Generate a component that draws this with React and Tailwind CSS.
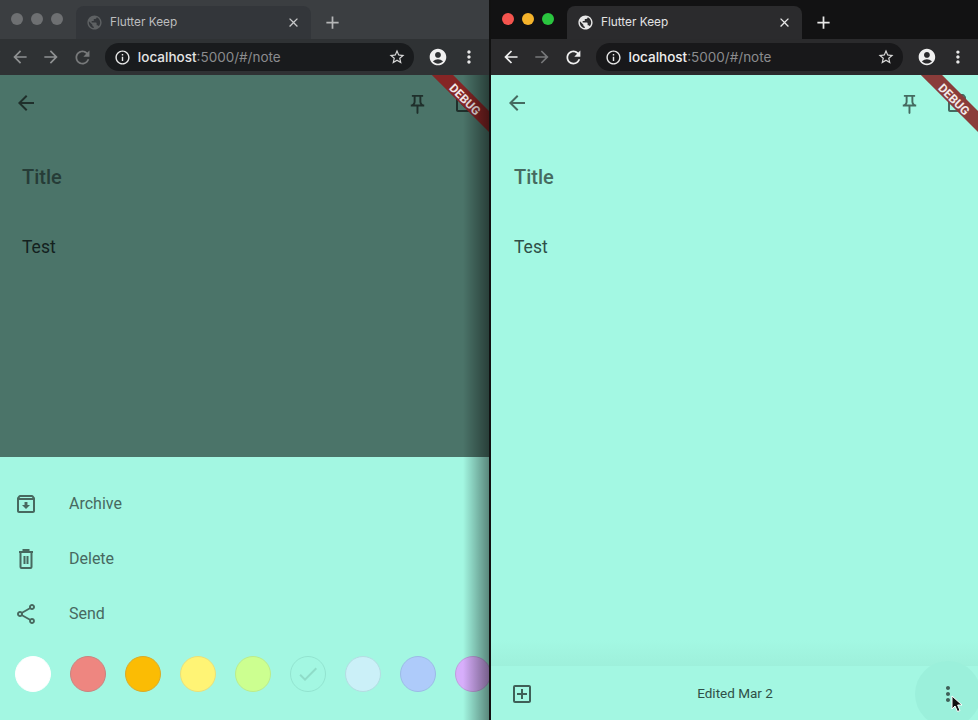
import React from "react";
import {
  MdAdd,
  MdAccountCircle,
  MdArrowBack,
  MdArrowForward,
  MdCheck,
  MdClose,
  MdInfoOutline,
  MdMoreVert,
  MdOutlineAddBox,
  MdOutlineArchive,
  MdOutlineShare,
  MdPublic,
  MdRefresh,
  MdStarBorder,
} from "react-icons/md";

// Outlined pin, drawn because the package's one has a different head
const PinIcon = ({ className }) => {
  return (
    <svg className={className} width="23" height="23" viewBox="0 0 24 24" fill="currentColor">
      <path d="M14 4v5c0 1.12.37 2.16 1 3H9c.65-.86 1-1.9 1-3V4h4m3-2H7c-.55 0-1 .45-1 1s.45 1 1 1h1v5c0 1.66-1.34 3-3 3v2h5.97v7l1 1 1-1v-7H19v-2c-1.66 0-3-1.34-3-3V4h1c.55 0 1-.45 1-1s-.45-1-1-1z" />
    </svg>
  );
};

// Trash can with the two inner bars
const TrashIcon = ({ className }) => {
  return (
    <svg className={className} width="24" height="24" viewBox="0 0 24 24" fill="none" stroke="currentColor" strokeWidth="2">
      <path d="M5 5h14" />
      <path d="M9.5 5V3h5v2" />
      <path d="M6.5 5v15a1 1 0 0 0 1 1h9a1 1 0 0 0 1-1V5" />
      <path d="M10.5 9v8" />
      <path d="M13.5 9v8" />
    </svg>
  );
};

// BrowserBar Component
const BrowserBar = ({ dimmed }) => {
  return (
    <div className="font-['Inter',sans-serif]">
      <div className={`h-[39px] flex items-end pl-[76px] ${dimmed ? "bg-[#3b3e41]" : "bg-[#121213]"} relative`}>
        <div className="absolute left-[11px] top-[13px] flex gap-[8px]">
          <span className={`w-3 h-3 rounded-full ${dimmed ? "bg-[#6e7072]" : "bg-[#f4544e]"}`} />
          <span className={`w-3 h-3 rounded-full ${dimmed ? "bg-[#6e7072]" : "bg-[#f5b32b]"}`} />
          <span className={`w-3 h-3 rounded-full ${dimmed ? "bg-[#6e7072]" : "bg-[#2ac53f]"}`} />
        </div>
        <div className={`w-[235px] h-[33px] rounded-t-lg flex items-center pl-[10px] pr-[10px] ${dimmed ? "bg-[#33363a]" : "bg-[#2b2b2d]"}`}>
          <MdPublic className={`text-[17px] ${dimmed ? "text-[#5e6163]" : "text-[#e8e8e8]"}`} />
          <span className={`ml-[7px] text-[11.8px] flex-1 ${dimmed ? "text-[#bcbdbe]" : "text-[#e3e3e3]"}`}>Flutter Keep</span>
          <MdClose className={`text-[15px] ${dimmed ? "text-[#c8c9ca]" : "text-[#e8e8e8]"}`} />
        </div>
        <MdAdd className={`text-[21px] ml-[11px] mb-[6px] ${dimmed ? "text-[#b5b6b7]" : "text-[#e8e8e8]"}`} />
      </div>
      <div className={`h-[36px] flex items-center pl-[10px] pr-[10px] ${dimmed ? "bg-[#2f3234]" : "bg-[#2a2a2c]"}`}>
        <MdArrowBack className={`text-[20px] ${dimmed ? "text-[#8f9192]" : "text-[#f0f0f0]"}`} />
        <MdArrowForward className={`text-[20px] ml-[11px] ${dimmed ? "text-[#8f9192]" : "text-[#77787a]"}`} />
        <MdRefresh className={`text-[21px] ml-[11px] ${dimmed ? "text-[#77797a]" : "text-[#f0f0f0]"}`} />
        <div className={`ml-[12px] w-[310px] h-[28px] rounded-full flex items-center pl-[9px] pr-[8px] ${dimmed ? "bg-[#191b1d]" : "bg-[#18181a]"}`}>
          <MdInfoOutline className="text-[17px] text-[#e8e8e8]" />
          <span className="ml-[7px] text-[13.5px] flex-1 text-[#8b8c8e]">
            <span className={dimmed ? "text-[#e4e4e4] font-medium" : "text-[#eeeeee] font-medium"}>localhost</span>:5000/#/note
          </span>
          <MdStarBorder className="text-[18px] text-[#d8d8d8]" />
        </div>
        <MdAccountCircle className="text-[20px] ml-[14px] text-[#f0f0f0]" />
        <MdMoreVert className="text-[20px] ml-[11px] text-[#e8e8e8]" />
      </div>
    </div>
  );
};

// DebugBanner Component
const DebugBanner = ({ dimmed }) => {
  return (
    <div className={`absolute top-[16px] right-[-22px] w-[90px] h-[15px] rotate-45 flex items-center justify-center pt-[3px] text-[12px] leading-none font-bold text-white/90 ${dimmed ? "bg-[#852525]" : "bg-[#8a3c3a]"}`}>
      DEBUG
    </div>
  );
};

// NoteHeader Component
const NoteHeader = ({ inset, barPadding, textTone, titleTone, iconTone }) => {
  return (
    <div className="flex flex-col">
      <div className={`flex items-center h-[55px] pl-[14px] ${barPadding} ${iconTone}`}>
        <MdArrowBack className="text-[24px]" />
        <div className="flex-1" />
        <PinIcon className="mt-[3px]" />
        <MdOutlineArchive className="text-[24px] ml-[24px]" />
      </div>
      <div className={`${inset} mt-[34px] text-[20px] font-medium leading-[26px] ${titleTone}`}>Title</div>
      <div className={`${inset} mt-[46px] text-[17.5px] leading-[22px] ${textTone}`}>Test</div>
    </div>
  );
};

// SheetRow Component
const SheetRow = ({ icon: Icon, label }) => {
  return (
    <div className="flex items-center h-[55px] pl-[14px] text-[#47695f]">
      <Icon className="text-[24px]" />
      <span className="ml-[31px] text-[16px]">{label}</span>
    </div>
  );
};

const swatches = [
  "bg-white border-white",
  "bg-[#ee8680] border-[#c98480]",
  "bg-[#fbbc04] border-[#d9ab2a]",
  "bg-[#fff475] border-[#e8e07c]",
  "bg-[#ccff90] border-[#bcec8c]",
  "bg-[#a3f7e2] border-[#93e4d0]",
  "bg-[#cbf0f8] border-[#b4dde2]",
  "bg-[#aecbfa] border-[#9cbce6]",
  "bg-[#d7aefb] border-[#bf9fdc]",
];

// LeftWindow Component
const LeftWindow = () => {
  return (
    <div className="w-[489px] h-[720px] flex flex-col relative overflow-hidden shrink-0">
      <BrowserBar dimmed />
      <div className="h-[382px] bg-[#4b7469] relative overflow-hidden">
        <NoteHeader
          inset="ml-[22px]"
          barPadding="pr-[12px]"
          iconTone="text-[#1f2f2b]"
          titleTone="text-[#263c37]"
          textTone="text-[#13211e]"
        />
        <DebugBanner dimmed />
      </div>
      <div className="flex-1 bg-[#a3f7e2] pt-[19px]">
        <SheetRow icon={MdOutlineArchive} label="Archive" />
        <SheetRow icon={TrashIcon} label="Delete" />
        <SheetRow icon={MdOutlineShare} label="Send" />
        <div className="flex items-center gap-[19px] pl-[15px] mt-[15px]">
          {swatches.map((swatch, i) => (
            <div key={i} className={`w-[36px] h-[36px] rounded-full border shrink-0 flex items-center justify-center ${swatch}`}>
              {i === 5 && <MdCheck className="text-[24px] text-[#8fdcc8]" />}
            </div>
          ))}
        </div>
      </div>
      <div className="absolute right-0 top-[75px] bottom-0 w-[26px] bg-gradient-to-r from-transparent to-black/45" />
    </div>
  );
};

// RightWindow Component
const RightWindow = () => {
  return (
    <div className="flex-1 h-[720px] flex flex-col relative overflow-hidden border-l-2 border-[#111]">
      <BrowserBar />
      <div className="flex-1 bg-[#a3f8e3] relative overflow-hidden">
        <NoteHeader
          inset="ml-[23px]"
          barPadding="pr-[9px]"
          iconTone="text-[#456a60]"
          titleTone="text-[#466a60]"
          textTone="text-[#2f4f47]"
        />
        <DebugBanner />
      </div>
      <div className="h-[26px] bg-gradient-to-b from-[#a3f8e3] to-[#9ef0db] -mt-[26px] relative" />
      <div className="h-[54px] bg-[#a3f7e2] flex items-center pl-[19px] pr-[18px] pt-[2px] relative text-[#3f5f57]">
        <MdOutlineAddBox className="text-[24px]" />
        <span className="flex-1 text-center text-[13.5px] text-[#2f4f47] -mt-[2px]">Edited Mar 2</span>
        <div className="relative">
          <div className="absolute -left-[21px] -top-[21px] w-[66px] h-[66px] rounded-full bg-[#9bf0db]" />
          <MdMoreVert className="text-[24px] relative" />
          <svg className="absolute left-[14px] top-[13px]" width="14" height="18" viewBox="0 0 14 18">
            <path d="M2 1 L2 14 L5 11 L7.5 16.5 L10 15.5 L7.6 10 L12 10 Z" fill="#111" stroke="#fff" strokeWidth="1" />
          </svg>
        </div>
      </div>
    </div>
  );
};

export default function App() {
  return (
    <div className="w-[978px] h-[720px] flex overflow-hidden bg-black font-['Roboto',sans-serif]">
      <LeftWindow />
      <RightWindow />
    </div>
  );
}
